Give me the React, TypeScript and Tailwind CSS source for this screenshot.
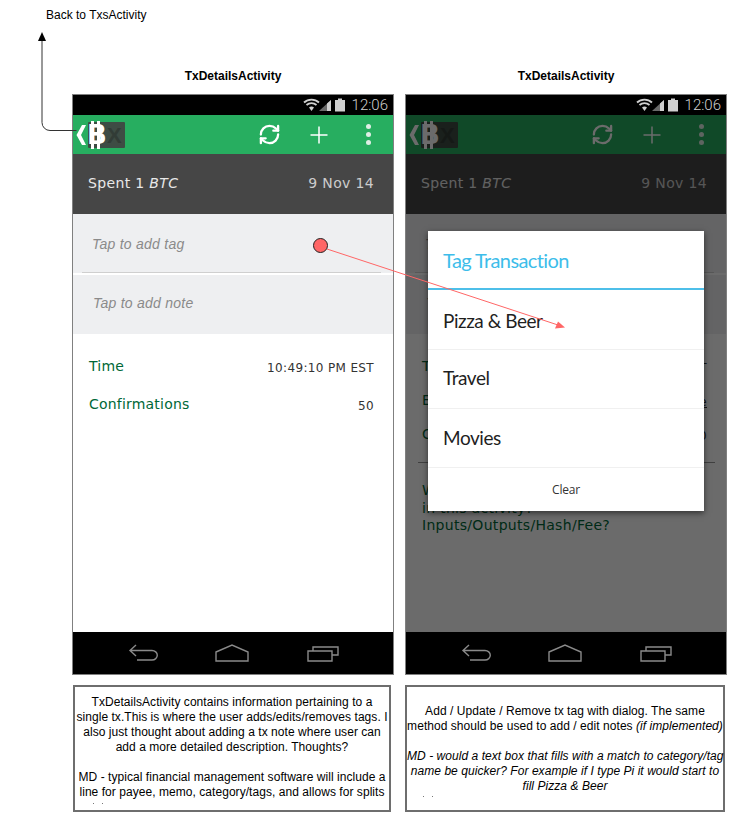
import { RefreshCw } from 'lucide-react';

const verdana = { fontFamily: '"DejaVu Sans", sans-serif' };

function StatusIcons() {
  return (
    <svg width="44" height="16" viewBox="0 0 44 16" className="shrink-0">
      {/* wifi */}
      <path d="M1 5.5a11 11 0 0 1 15 0" fill="none" stroke="#d0d0d0" strokeWidth="1.8" />
      <path d="M3.5 8a7.5 7.5 0 0 1 10 0" fill="none" stroke="#d0d0d0" strokeWidth="1.8" />
      <path d="M6 10.6a4 4 0 0 1 5 0L8.5 14z" fill="#d0d0d0" />
      {/* signal */}
      <path d="M16 14 L28 3 V14 Z" fill="#6a6a6a" />
      <path d="M24 6.5 L28 3 V14 H24 Z" fill="#cfcfcf" />
      {/* battery */}
      <path d="M32 3h3V1.5h4V3h3v11.5H32z" fill="#d0d0d0" />
    </svg>
  );
}

function LogoMark() {
  return (
    <svg width="52" height="28" viewBox="0 0 52 28" className="shrink-0">
      <rect x="13" y="1" width="37" height="26" rx="1" fill="#3e4c44" />
      <text x="32" y="22" fontSize="22" fontWeight="700" fontFamily="Liberation Sans" fill="#323c36">X</text>
      <path d="M11 4 L6 14 L11 24 H7 L1.5 14 L7 4 Z" fill="#fff" />
      <rect x="16" y="0" width="3" height="28" fill="#fff" />
      <rect x="22" y="0" width="3" height="28" fill="#fff" />
      <rect x="19" y="6" width="3" height="16" fill="#3e4c44" />
      <text x="12" y="23" fontSize="26" fontWeight="700" fontFamily="DejaVu Sans" fill="#fff">B</text>
    </svg>
  );
}

function NavBar() {
  return (
    <div className="flex h-[42px] shrink-0 items-center bg-black pl-[55px]">
      <svg width="32" height="18" viewBox="0 0 32 18" fill="none" stroke="#8a8a8a" strokeWidth="1.4">
        <path d="M8 1 L2 6.5 L8 12 M2 6.5 H24 a5 4.5 0 0 1 0 9.5 H9" />
      </svg>
      <svg width="34" height="18" viewBox="0 0 34 18" fill="none" stroke="#8a8a8a" strokeWidth="1.4" className="ml-[55px]">
        <path d="M1 8 L17 1 L33 8 V17 H1 Z" />
      </svg>
      <svg width="32" height="18" viewBox="0 0 32 18" fill="none" stroke="#8a8a8a" strokeWidth="1.4" className="ml-[58px]">
        <path d="M1 7 H25 V17 H1 Z M6 7 V3 H31 V11 H25" />
      </svg>
    </div>
  );
}

type Row = { label: string; value: string; underline?: boolean };

const tags = [
  { name: 'Pizza & Beer', row: 'h-[60px] pt-[3px]' },
  { name: 'Travel', row: 'h-[59px] pb-[2px]' },
  { name: 'Movies', row: 'h-[59px]' },
];

function Phone({ rows, rowGap, dimmed }: { rows: Row[]; rowGap: string; dimmed?: boolean }) {
  return (
    <div className="relative flex h-[581px] flex-col border border-[#808080]" style={verdana}>
      <div className="flex h-[20px] shrink-0 items-center justify-end gap-[5px] bg-black pr-[5px]">
        <StatusIcons />
        <span className="text-[15px] font-light leading-none text-[#cfcfcf]" style={{ fontFamily: 'Roboto, sans-serif' }}>
          12:06
        </span>
      </div>

      <div className="relative flex min-h-0 flex-1 flex-col">
        <div className="flex h-[39px] shrink-0 items-center bg-[#27ae60] pl-[2px] pr-[22px] text-white">
          <LogoMark />
          <RefreshCw size={23} strokeWidth={2.4} className="ml-auto" />
          <svg width="20" height="20" viewBox="0 0 20 20" className="ml-[28px]" fill="none" stroke="#fff" strokeWidth="1.5">
            <path d="M10 1.5v17M1.5 10h17" />
          </svg>
          <div className="ml-[37px] flex flex-col gap-[3px]">
            <span className="h-[5px] w-[5px] rounded-full bg-[#dfeee5]" />
            <span className="h-[5px] w-[5px] rounded-full bg-[#dfeee5]" />
            <span className="h-[5px] w-[5px] rounded-full bg-[#dfeee5]" />
          </div>
        </div>

        <div className="flex h-[60px] shrink-0 items-center justify-between bg-[#464646] pl-[15px] pr-[19px] pb-[2px] text-[14px] tracking-[0.35px] text-[#e8e8e8]">
          <span>
            Spent 1 <i>BTC</i>
          </span>
          <span className="text-[#cccccc]">9 Nov 14</span>
        </div>

        <div className="relative flex h-[59px] shrink-0 items-center bg-[#eeeff1] pl-[19px] pt-[2px]">
          <i className="text-[14px] tracking-[0.25px] text-[#8a8a8a]" style={{ fontFamily: '"Liberation Sans", sans-serif' }}>
            Tap to add tag
          </i>
          <div className="absolute bottom-0 left-[9px] right-[12px] h-px bg-[#cfcfcf]" />
        </div>
        <div className="h-[2px] shrink-0 bg-white" />
        <div className="flex h-[59px] shrink-0 items-center bg-[#eeeff1] pl-[20px] pb-[2px]">
          <i className="text-[14px] tracking-[0.25px] text-[#8a8a8a]" style={{ fontFamily: '"Liberation Sans", sans-serif' }}>
            Tap to add note
          </i>
        </div>

        <div className={`flex flex-1 flex-col bg-white pl-[16px] pr-[19px] pt-[22px] ${rowGap}`}>
          {rows.map((row) => (
            <div key={row.label} className="flex h-[20px] items-center justify-between">
              <span className="text-[14px] tracking-[0.2px] text-[#006837]">{row.label}</span>
              <span className={`pt-[4px] text-[12px] tracking-[0.35px] text-[#333333] ${row.underline ? 'underline' : ''}`}>
                {row.value}
              </span>
            </div>
          ))}
          {dimmed && (
            <div className="-ml-[4px] -mr-[8px] mt-[4px] border-t border-[#999999] pl-[4px] pt-[19px] text-[14px] leading-[17.5px] tracking-[0.3px] text-[#006837]">
              What else should be shown
              <br />
              in this activity?
              <br />
              Inputs/Outputs/Hash/Fee?
            </div>
          )}
        </div>

        {dimmed && <div className="absolute inset-0 bg-black/[0.58]" />}
      </div>

      <NavBar />

      {dimmed && (
        <div className="absolute left-[22px] top-[136px] w-[276px] bg-white shadow-[0_2px_6px_rgba(0,0,0,0.55)]" style={{ fontFamily: 'Lato, sans-serif' }}>
          <div className="flex h-[59px] items-center border-b-2 border-[#4dbfe9] pl-[15px] text-[20px] tracking-[-0.6px] text-[#3dbdea]">Tag Transaction</div>
          {tags.map((tag) => (
            <div key={tag.name} className={`flex items-center border-b border-[#f0f0f0] pl-[15px] text-[19px] tracking-[-0.45px] text-[#1f1f1f] ${tag.row}`}>
              {tag.name}
            </div>
          ))}
          <div className="flex h-[43px] items-center justify-center pt-[1px] text-[12px] tracking-[-0.2px] text-[#333333]" style={{ fontFamily: '"Open Sans", sans-serif' }}>
            Clear
          </div>
        </div>
      )}
    </div>
  );
}

function Note({ className, specks, children }: { className: string; specks: string; children: React.ReactNode }) {
  return (
    <div className={`relative mt-[10px] h-[127px] border-2 border-[#6e6e6e] text-center text-[12px] leading-[15px] tracking-[0.05px] whitespace-nowrap text-black ${className}`}>
      {children}
      <div className={`absolute flex gap-[8px] ${specks}`}>
        <span className="h-px w-px bg-[#777777]" />
        <span className="h-px w-px bg-[#777777]" />
      </div>
    </div>
  );
}

export default function App() {
  return (
    <div className="relative h-[816px] w-[743px] overflow-hidden bg-white" style={{ fontFamily: '"Liberation Sans", Arial, sans-serif' }}>
      <div className="absolute left-[46px] top-[8px] text-[12px] leading-[15px] text-black">Back to TxsActivity</div>

      <div className="flex gap-[11px] pl-[72px]">
        <div className="w-[322px]">
          <div className="h-[94px] pt-[69px] text-center text-[12px] font-bold leading-[15px] text-black">TxDetailsActivity</div>
          <Phone
            rowGap="gap-[18px]"
            rows={[
              { label: 'Time', value: '10:49:10 PM EST' },
              { label: 'Confirmations', value: '50' },
            ]}
          />
          <Note className="ml-px w-[318px] pt-[8px]" specks="left-[18px] top-[116px]">
            TxDetailsActivity contains information pertaining to a
            <br />
            single tx.This is where the user adds/edits/removes tags. I
            <br />
            also just thought about adding a tx note where user can
            <br />
            add a more detailed description. Thoughts?
            <br />
            <br />
            MD - typical financial management software will include a
            <br />
            line for payee, memo, category/tags, and allows for splits
          </Note>
        </div>

        <div className="w-[322px]">
          <div className="h-[94px] pt-[69px] text-center text-[12px] font-bold leading-[15px] text-black">TxDetailsActivity</div>
          <Phone
            dimmed
            rowGap="gap-[14px]"
            rows={[
              { label: 'Time', value: '10:49:10 PM EST' },
              { label: 'Explorer', value: 'View online', underline: true },
              { label: 'Confirmations', value: '50' },
            ]}
          />
          <Note className="w-[320px] pt-[17px]" specks="left-[16px] top-[109px]">
            Add / Update / Remove tx tag with dialog. The same
            <br />
            method should be used to add / edit notes <i>(if implemented)</i>
            <br />
            <br />
            <i>
              MD - would a text box that fills with a match to category/tag
              <br />
              name be quicker? For example if I type Pi it would start to
              <br />
              fill Pizza &amp; Beer
            </i>
          </Note>
        </div>
      </div>

      {/* connectors drawn over the screens */}
      <svg className="pointer-events-none absolute left-0 top-0" width="743" height="816" fill="none">
        <path d="M76.5 130.5 H50 a8 8 0 0 1 -8 -8 V38" stroke="#333" />
        <path d="M42 32 L46 41 H38 Z" fill="#000" />
        <path d="M327 249 L558 325" stroke="#ff6666" />
        <path d="M565 327.5 L555 328.5 L558 321.5 Z" fill="#ff6666" />
        <circle cx="320.5" cy="245.5" r="7" fill="#ff6666" stroke="#222" />
      </svg>
    </div>
  );
}
